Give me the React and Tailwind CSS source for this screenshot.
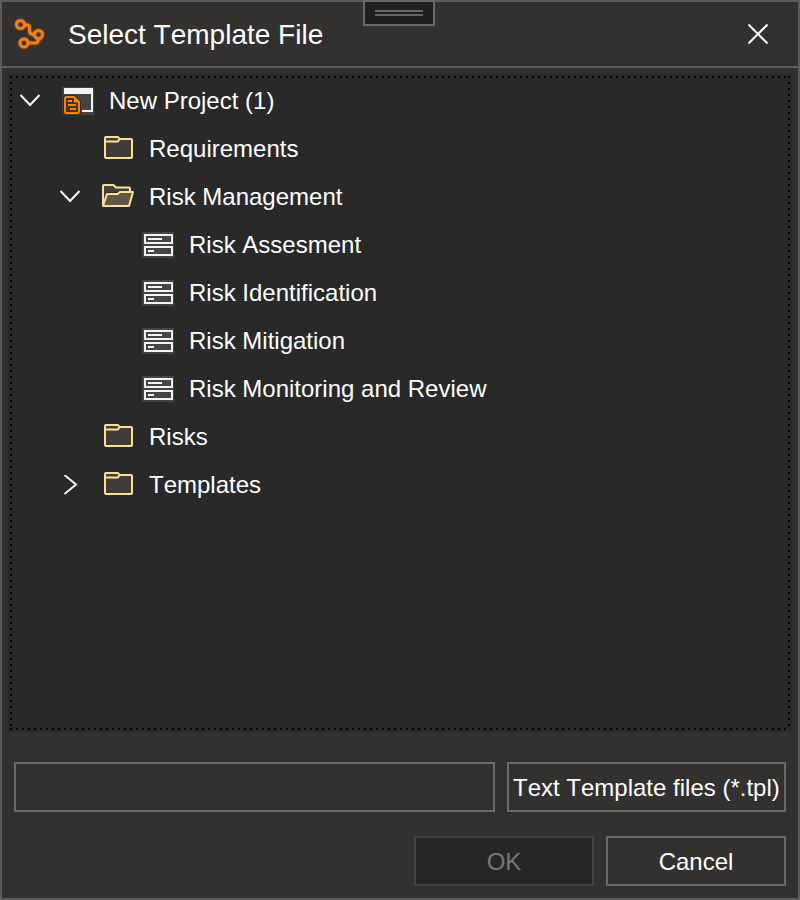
function Logo() {
  return (
    <svg width="32" height="32" viewBox="0 0 32 32" fill="none" aria-hidden="true">
      <g stroke="#ff7f00" strokeOpacity="0.25" strokeWidth="5">
        <circle cx="6.5" cy="6.5" r="4" />
        <circle cx="24.5" cy="16.5" r="4" />
        <circle cx="10" cy="25" r="4" />
        <path d="M10.5 7H13q2.500 0 2.500 2.500V13q0 3.500 5 3.500M14 25h7.500q3 0 3-4.500" />
      </g>
      <g stroke="#f77f0e" strokeWidth="3">
        <circle cx="6.500" cy="6.500" r="4" />
        <circle cx="24.500" cy="16.500" r="4" />
        <circle cx="10" cy="25" r="4" />
        <path d="M10.500 7H13q2.500 0 2.500 2.500V13q0 3.500 5 3.500M14 25h7.500q3 0 3-4.500" />
      </g>
    </svg>
  );
}

function ProjectIcon() {
  return (
    <svg width="32" height="28" viewBox="0 0 32 28" fill="none" aria-hidden="true">
      <path fill="#444444" d="M0 0h32v28H0z" />
      <path fill="#f4f4f4" d="M2 1h29v6H2z" />
      <path stroke="#f4f4f4" strokeWidth="2" d="M30 7v17H20" />
      <path fill="#2a2a2a" d="M1 8h12l6 6v13H1z" />
      <path fill="#ff7f00" fillOpacity="0.12" d="M3 10h9l5 5v11H3z" />
      <path stroke="#ff7f00" strokeWidth="2" strokeLinejoin="round" d="M4.500 10H12l5 5v9.500q0 1.500-1.500 1.500H4.500q-1.500 0-1.500-1.500V11.500q0-1.500 1.500-1.500z" />
      <path fill="#ff7f00" d="M12 10l6 5.500h-6z" />
      <path stroke="#ff7f00" strokeWidth="2" d="M6 14h4M6 18h8M8 22h6" />
    </svg>
  );
}

function FolderIcon() {
  return (
    <svg width="32" height="28" viewBox="0 0 32 28" fill="none" aria-hidden="true">
      <path fill="#403d35" d="M3 3h27v20H3z" />
      <path stroke="#ffdf96" strokeWidth="2" strokeLinejoin="round" d="M3 7V3q0-1 1-1h12l1.500 2H29q1 0 1 1v17q0 1-1 1H4q-1 0-1-1zM3 6.500h13l1.500-2.500" />
    </svg>
  );
}

function OpenFolderIcon() {
  return (
    <svg width="32" height="28" viewBox="0 0 32 28" fill="none" aria-hidden="true">
      <path fill="#454138" d="M1 2h12l2 3h14v4H5L1 22z" />
      <path fill="#5f5848" d="M6 11h10l3-2h12l-4 14H1z" />
      <path stroke="#ffdf96" strokeWidth="2" strokeLinejoin="round" d="M1 22V3q0-1 1-1h9.500l2.500 2.500h13q1 0 1 1V9M1 23L5 11h10.500l2.500-2h13l-4 14z" />
    </svg>
  );
}

function DocumentIcon() {
  return (
    <svg width="32" height="26" viewBox="0 0 32 26" fill="none" aria-hidden="true">
      <path fill="#444444" d="M0 0h32v26H0z" />
      <path stroke="#f4f4f4" strokeWidth="2" d="M3 3h27v8H3zM3 15h27v8H3z" />
      <path stroke="#f4f4f4" strokeWidth="2" d="M6 7h14M6 19h6" />
    </svg>
  );
}

function Chevron({ open }) {
  return (
    <svg width="20" height="20" viewBox="0 0 20 20" fill="none" stroke="#f4f4f4" strokeWidth="2" aria-hidden="true">
      <path d={open ? "M.500 4L10 14l9.500-10" : "M4.500 0L16 9.500l-11.500 9.500"} />
    </svg>
  );
}

const icons = {
  project: ProjectIcon,
  folder: FolderIcon,
  openFolder: OpenFolderIcon,
  document: DocumentIcon,
};

const project = {
  label: "New Project (1)",
  icon: "project",
  open: true,
  children: [
    { label: "Requirements", icon: "folder" },
    {
      label: "Risk Management",
      icon: "openFolder",
      open: true,
      children: [
        { label: "Risk Assesment", icon: "document" },
        { label: "Risk Identification", icon: "document" },
        { label: "Risk Mitigation", icon: "document" },
        { label: "Risk Monitoring and Review", icon: "document" },
      ],
    },
    { label: "Risks", icon: "folder" },
    { label: "Templates", icon: "folder", open: false },
  ],
};

function TreeItem({ node }) {
  const Icon = icons[node.icon];
  const expandable = node.open !== undefined;
  return (
    <li role="treeitem" aria-expanded={expandable ? node.open : undefined}>
      <div className="flex h-12 items-center">
        <div className="mr-[22px] flex w-5 shrink-0">
          {expandable && (
            <button type="button" aria-label={(node.open ? "Collapse " : "Expand ") + node.label}>
              <Chevron open={node.open} />
            </button>
          )}
        </div>
        <span className="mr-[15px] shrink-0">
          <Icon />
        </span>
        <span className="whitespace-nowrap">{node.label}</span>
      </div>
      {node.children && (
        <ul role="group" className="pl-10">
          {node.children.map((child) => (
            <TreeItem key={child.label} node={child} />
          ))}
        </ul>
      )}
    </li>
  );
}

export default function App() {
  return (
    <div
      role="dialog"
      aria-labelledby="dialog-title"
      className="relative flex min-h-screen flex-col border-2 border-[#5a5a5a] bg-[#333130] font-['Liberation_Sans',Arial,sans-serif] text-2xl text-white [font-kerning:none]"
    >
      <div className="absolute -top-0.5 left-1/2 -ml-[37px] flex h-[26px] w-[72px] flex-col items-center justify-center gap-0.5 border-2 border-[#686868] bg-[#1f1f1f]">
        <div className="h-0.5 w-12 bg-[#686868]" />
        <div className="h-0.5 w-12 bg-[#686868]" />
      </div>

      <header className="flex h-[66px] items-center border-b-2 border-[#5a5a5a] px-3">
        <Logo />
        <h1 id="dialog-title" className="ml-[22px] flex-1 pt-0.5 text-[28px]">
          Select Template File
        </h1>
        <button type="button" aria-label="Close" className="mr-4.5">
          <svg width="20" height="20" viewBox="0 0 20 20" stroke="#ffffff" strokeWidth="2" aria-hidden="true">
            <path d="M.500.500l19 19M19.500.500l-19 19" />
          </svg>
        </button>
      </header>

      <main className="mx-1.5 mt-1.5 flex flex-1 flex-col bg-[#292929] p-0.5">
        <div className="flex-1 bg-[image:repeating-linear-gradient(90deg,#000_0_2px,transparent_2px_6px),repeating-linear-gradient(90deg,#000_0_2px,transparent_2px_6px),repeating-linear-gradient(#000_0_2px,transparent_2px_6px),repeating-linear-gradient(#000_0_2px,transparent_2px_6px)] bg-[position:top_left,bottom_left,top_left,top_right] bg-[size:100%_2px,100%_2px,2px_100%,2px_100%] bg-no-repeat px-2.5 py-px">
          <ul role="tree" aria-label="Project files">
            <TreeItem node={project} />
          </ul>
        </div>
      </main>

      <footer className="flex flex-col gap-6 px-3 pt-[30px] pb-3">
        <div className="flex gap-3">
          <input
            type="text"
            aria-label="File name"
            className="h-[50px] min-w-0 flex-1 border-2 border-[#6a6a68] bg-transparent px-1 outline-none"
          />
          <select
            aria-label="File type"
            className="h-[50px] w-[279px] appearance-none border-2 border-[#6a6a68] bg-[#333130] px-1 pt-0.5 outline-none [font-kerning:none]"
          >
            <option>Text Template files (*.tpl)</option>
          </select>
        </div>
        <div className="flex justify-end gap-3">
          <button type="button" disabled className="h-[50px] w-[180px] border-2 border-[#444444] bg-[#262626] pt-0.5 text-[#777777]">
            OK
          </button>
          <button type="button" className="h-[50px] w-[180px] border-2 border-[#6a6a68] pt-0.5">
            Cancel
          </button>
        </div>
      </footer>
    </div>
  );
}
